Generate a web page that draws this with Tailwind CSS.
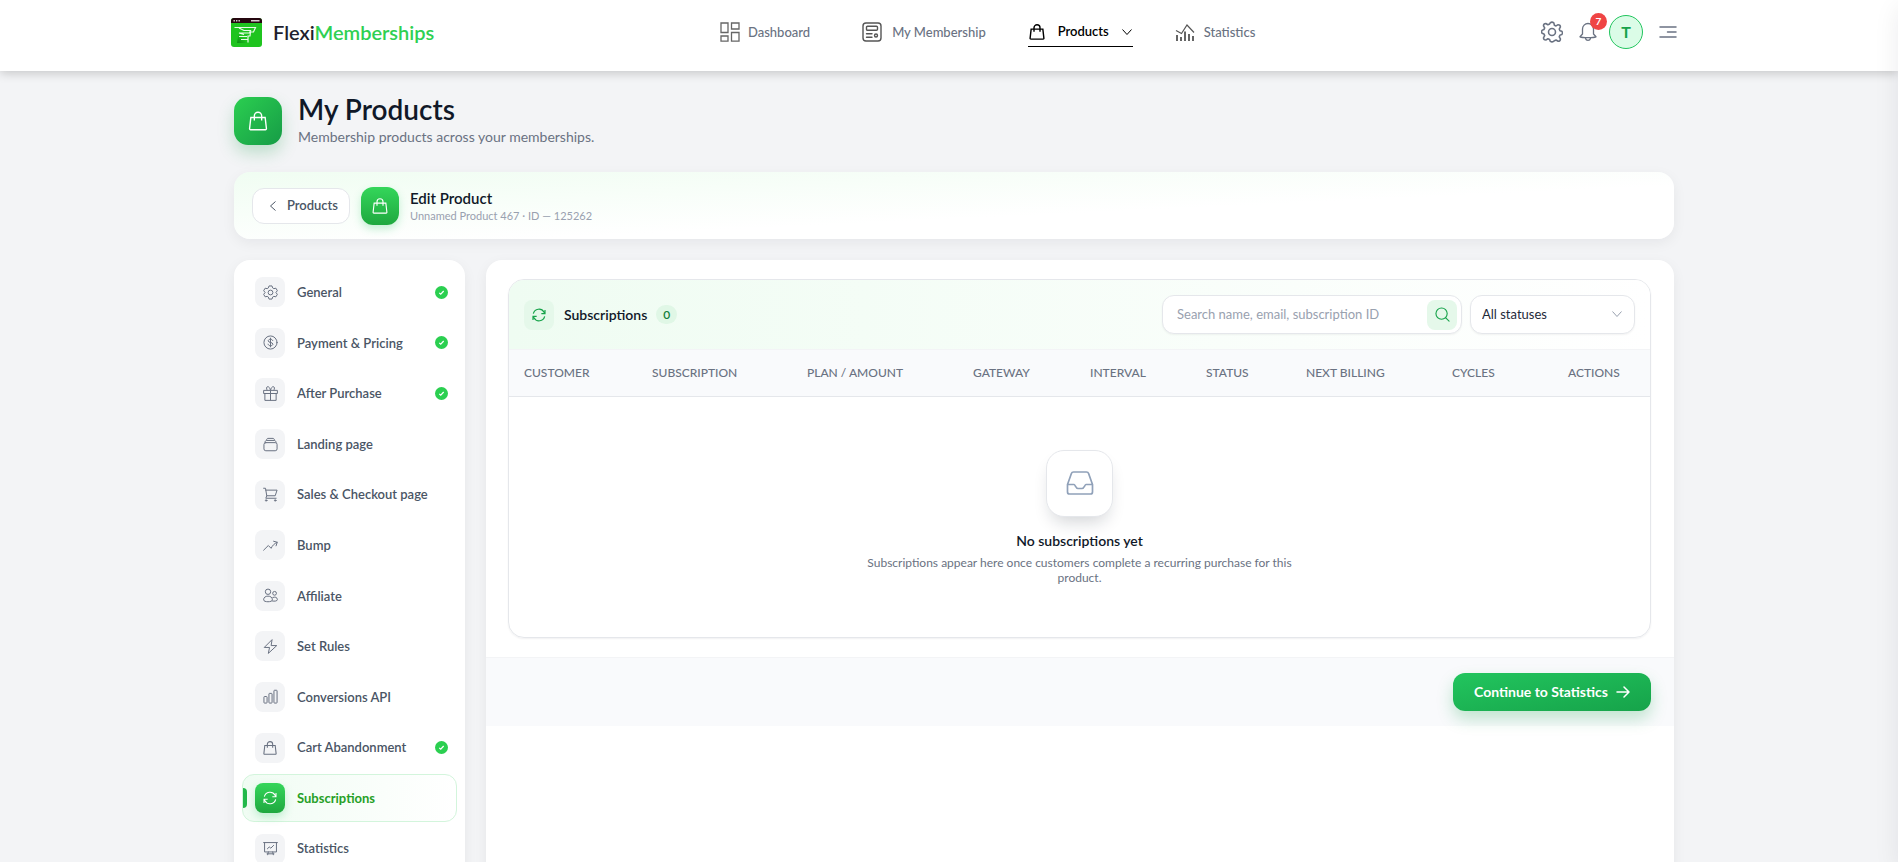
<!DOCTYPE html>
<html lang="en">
<head>
    <meta charset="UTF-8">
    <meta name="viewport" content="width=device-width, initial-scale=1.0">
    <title>FlexiMemberships - My Products</title>
    <script src="https://cdn.jsdelivr.net/npm/@tailwindcss/browser@4"></script>
</head>
<body class="min-h-screen overflow-x-hidden bg-[#f3f4f6] font-['Lato','Liberation_Sans',sans-serif] text-sm text-gray-600">

    <!-- Shared icons -->
    <svg class="hidden" fill="none" stroke-linecap="round" stroke-linejoin="round">
        <symbol id="bag" viewBox="0 0 24 24"><path d="M4.2 8.2h15.6l1.4 12.2a1 1 0 0 1-1 1.1H3.8a1 1 0 0 1-1-1.1zM8 11.5V6.4a4 4 0 0 1 8 0v5.1"/></symbol>
        <symbol id="sync" viewBox="0 0 24 24"><path d="M3.5 10A8.7 8.7 0 0 1 19.6 7.8L21 10M21 4.5V10h-5.5M20.5 14A8.7 8.7 0 0 1 4.4 16.2L3 14M3 19.5V14h5.5"/></symbol>
        <symbol id="check" viewBox="0 0 12 12"><circle cx="6" cy="6" r="6" fill="#2bcf50"/><path d="M3.9 6.300l1.400 1.300 2.700-3" fill="none" stroke="#fff" stroke-width="1.100"/></symbol>
        <symbol id="chevron" viewBox="0 0 12 12"><path d="M1.500 3.500L6 8.500l4.500-5"/></symbol>
    </svg>

    <header class="relative z-10 h-[71px] bg-white pl-[10px] shadow-[0_2px_10px_rgba(0,0,0,0.2)]">
        <div class="mx-auto flex h-16 w-full max-w-[1446px] items-center justify-between">
            <a href="#" class="flex items-center gap-[11px]">
                <svg class="h-[29px] w-[31px]" viewBox="0 0 31 29" fill="none">
                    <defs>
                        <linearGradient id="logo-green" x1="0" y1="1" x2="1" y2="0">
                            <stop offset="0" stop-color="#0b8a12"/>
                            <stop offset=".5" stop-color="#1fc41f"/>
                        </linearGradient>
                    </defs>
                    <rect width="31" height="29" rx="3" fill="#1fc41f"/>
                    <path d="M8 13l9 12H6z" fill="url(#logo-green)"/>
                    <path d="M0 5V3a3 3 0 0 1 3-3h25a3 3 0 0 1 3 3v2z" fill="#25060f"/>
                    <path d="M2.500 2.800h1.400M5 2.800h1.400M7.500 2.800h1.400M20 2.800h8.500" stroke="#d9c9cf" stroke-width="1.600"/>
                    <path d="M3.500 9.500h21l-2 4.500h-3l-.5 4h-2V24.500M8 10l5 2.500h6.500l-1 2.500H8l5 1.500M8 18.500h8M10 21.500h7" stroke="#e9fbe9" stroke-width="1.200"/>
                </svg>
                <span class="text-xl font-semibold text-[#1f1f2e]">Flexi<span class="text-[#2fd052]">Memberships</span></span>
            </a>

            <nav class="flex items-center gap-[42px] text-[13px] font-medium text-gray-500">
                <a href="#" class="flex items-center gap-2">
                    <svg class="size-5" viewBox="0 0 20 20" fill="none" stroke="#666" stroke-width="1.300"><path d="M1 1h7v9.500H1zM11.500 1H19v6h-7.500zM1 14h7v5.200H1zM11.500 10.500H19v8.700h-7.500z"/></svg>
                    Dashboard
                </a>
                <a href="#" class="ml-[10px] flex items-center gap-[10px]">
                    <svg class="size-5" viewBox="0 0 20 20" fill="none" stroke="#555" stroke-width="1.400" stroke-linecap="round"><rect x="1" y="1" width="18" height="18" rx="3"/><rect x="4.500" y="4.300" width="11" height="4" rx="1"/><path d="M4.500 11.800h5.500M4.500 15.200h5.500"/><circle cx="14" cy="13.500" r="1.500"/></svg>
                    My Membership
                </a>
                <a href="#" class="flex h-[30px] w-[105px] items-center justify-between border-b border-black font-semibold text-black">
                    <svg class="size-[18px]" fill="none" stroke="currentColor" stroke-width="1.900"><use href="#bag"/></svg>
                    Products
                    <svg class="size-3" fill="none" stroke="currentColor" stroke-width="1"><use href="#chevron"/></svg>
                </a>
                <a href="#" class="flex items-center gap-[9px]">
                    <svg class="size-5" viewBox="0 0 20 20" fill="none" stroke="#555" stroke-width="1.200"><path d="M1 8.500l5.500 3L12 3l7 7.500"/><path d="M2 13v6M6 15v4M10 9.500V19M14 12v7M18 14v5" stroke-width="1.800"/></svg>
                    Statistics
                </a>
            </nav>

            <div class="flex items-center text-gray-500">
                <button type="button" aria-label="Settings">
                    <svg class="size-[22px]" viewBox="0 0 24 24" fill="none" stroke="currentColor" stroke-width="1.700" stroke-linejoin="round"><circle cx="12" cy="12" r="3.800"/><path d="M10 2q2-1.500 4 0l.6 2.600 1.800.8 2.300-1.400q2.500 0 2.500 2.500l-1.300 2.300.8 1.900 2 .6q1.500 1.700 0 3.400l-2 .7-.8 1.900 1.300 2.300q0 2.500-2.500 2.500l-2.300-1.400-1.800.8L14 22q-2 1.500-4 0l-.6-1.800-1.900-.8-2.300 1.400q-2.500 0-2.500-2.500L4 16l-.8-1.900-1.900-.7q-1.500-1.700 0-3.400l1.900-.6L4 7.500 2.700 5.200q0-2.500 2.500-2.500l2.300 1.400 1.900-.8z"/></svg>
                </button>
                <button type="button" aria-label="Notifications" class="relative ml-[15px]">
                    <svg class="size-5" viewBox="0 0 20 20" fill="none" stroke="currentColor" stroke-width="1.300" stroke-linecap="round" stroke-linejoin="round"><path d="M10 1.500a5.500 5.500 0 0 0-5.500 5.500v5L2 14.800c2.500 1.100 13.500 1.100 16 0L15.500 12V7A5.500 5.500 0 0 0 10 1.500zM7.500 16.500a2.600 2.600 0 0 0 5 0"/></svg>
                    <span class="absolute -top-[9px] left-[12px] flex size-[17px] items-center justify-center rounded-full bg-[#ef4444] text-[10px] font-bold text-white">7</span>
                </button>
                <button type="button" class="ml-[11px] flex size-[34px] items-center justify-center rounded-full border border-[#22c55e] bg-green-100 text-base font-bold text-[#16a34a]">T</button>
                <button type="button" aria-label="Menu" class="ml-4">
                    <svg class="h-[14px] w-[18px]" viewBox="0 0 18 14" stroke="currentColor" stroke-width="1.500" stroke-linecap="round"><path d="M1 2h16M8.500 7H17M1 12h16"/></svg>
                </button>
            </div>
        </div>
    </header>

    <div class="pl-[10px]">
    <main class="mx-auto w-full max-w-[1440px] pt-6">
        <div class="flex items-center gap-4">
            <div class="flex size-12 shrink-0 items-center justify-center rounded-[14px] bg-linear-to-br from-[#2bcf50] to-[#169c46] text-white shadow-[0_8px_16px_rgba(34,160,80,0.25)]">
                <svg class="size-[22px]" fill="none" stroke="currentColor" stroke-width="1.500"><use href="#bag"/></svg>
            </div>
            <div>
                <h1 class="text-[28px] leading-7 font-semibold text-gray-900">My Products</h1>
                <p class="mt-1 text-sm leading-5 text-gray-500">Membership products across your memberships.</p>
            </div>
        </div>

        <section class="mt-[25px] flex h-[67px] items-center rounded-2xl bg-linear-to-br from-[#f0fdf2] to-white to-60% px-[18px] shadow-[0_4px_14px_rgba(15,23,42,0.06)]">
            <a href="#" class="flex h-9 w-[98px] items-center justify-between rounded-xl border border-gray-200 bg-white pr-[11px] pl-[14px] text-[13px] font-semibold text-gray-600">
                <svg class="size-3 rotate-90" fill="none" stroke="currentColor" stroke-width="1"><use href="#chevron"/></svg>
                Products
            </a>
            <div class="ml-[11px] flex size-[38px] items-center justify-center rounded-xl bg-linear-to-b from-[#34d65a] to-[#1fa83f] text-white shadow-[0_4px_8px_rgba(34,197,94,0.25)]">
                <svg class="size-[18px]" fill="none" stroke="currentColor" stroke-width="1.500"><use href="#bag"/></svg>
            </div>
            <div class="ml-[11px]">
                <h2 class="text-[15px] leading-5 font-semibold text-gray-900">Edit Product</h2>
                <p class="text-[11px] leading-4 text-gray-400">Unnamed Product 467 · ID — 125262</p>
            </div>
        </section>

        <div class="mt-[21px] flex items-stretch gap-[21px]">
            <aside class="min-h-[640px] w-[231px] shrink-0 rounded-t-2xl bg-white px-2 pt-2 shadow-[0_4px_14px_rgba(15,23,42,0.06)]">
                <nav class="grid h-[605px] auto-rows-fr gap-[2px] text-[13px] font-semibold text-gray-600">
                    <a href="#" class="flex items-center gap-3 px-[13px]">
                        <span class="flex size-[30px] items-center justify-center rounded-lg bg-gray-100 text-gray-500"><svg class="size-[15px]" viewBox="0 0 24 24" fill="none" stroke="currentColor" stroke-width="1.600" stroke-linejoin="round"><path d="M9.600 1.500h4.800l1 3.200 2 1.100 3.200-.7L23 9.200l-2.200 2.400v.8L23 14.800l-2.400 4.100-3.200-.7-2 1.100-1 3.200H9.600l-1-3.200-2-1.100-3.200.7L1 14.800l2.200-2.400v-.8L1 9.200l2.400-4.100 3.200.7 2-1.100z"/><circle cx="12" cy="12" r="3.800"/></svg></span>
                        <span class="flex-1">General</span>
                        <svg class="-mr-1 size-[13px]"><use href="#check"/></svg>
                    </a>
                    <a href="#" class="flex items-center gap-3 px-[13px]">
                        <span class="flex size-[30px] items-center justify-center rounded-lg bg-gray-100 text-gray-500"><svg class="size-[15px]" viewBox="0 0 24 24" fill="none" stroke="currentColor" stroke-width="1.600" stroke-linecap="round"><circle cx="12" cy="12" r="10.500"/><path d="M12 5v14M15.600 9c-.3-1.500-1.800-2.200-3.600-2.200-2 0-3.600.9-3.600 2.500 0 3.700 7.400 1.700 7.400 5.300 0 1.700-1.700 2.600-3.800 2.600-2 0-3.600-.9-3.800-2.500"/></svg></span>
                        <span class="flex-1">Payment &amp; Pricing</span>
                        <svg class="-mr-1 size-[13px]"><use href="#check"/></svg>
                    </a>
                    <a href="#" class="flex items-center gap-3 px-[13px]">
                        <span class="flex size-[30px] items-center justify-center rounded-lg bg-gray-100 text-gray-500"><svg class="size-[15px]" viewBox="0 0 24 24" fill="none" stroke="currentColor" stroke-width="1.600" stroke-linejoin="round"><path d="M1 7h22v5H1zM3 12h18v11H3zM12 7v16M12 7C11 3 9.500 1 7.500 1S5 5 7 7M12 7c1-4 2.500-6 4.500-6S19 5 17 7"/></svg></span>
                        <span class="flex-1">After Purchase</span>
                        <svg class="-mr-1 size-[13px]"><use href="#check"/></svg>
                    </a>
                    <a href="#" class="flex items-center gap-3 px-[13px]">
                        <span class="flex size-[30px] items-center justify-center rounded-lg bg-gray-100 text-gray-500"><svg class="size-[15px]" viewBox="0 0 24 24" fill="none" stroke="currentColor" stroke-width="1.600" stroke-linecap="round"><rect x="1.500" y="9" width="21" height="13" rx="3"/><path d="M3 8.500C3.500 6 5 5.500 6 5.500h12c1 0 2.500.5 3 3M5.500 5C6 2.800 7 2.200 8 2.200h8c1 0 2 .6 2.500 2.800"/></svg></span>
                        <span class="flex-1">Landing page</span>
                    </a>
                    <a href="#" class="flex items-center gap-3 px-[13px]">
                        <span class="flex size-[30px] items-center justify-center rounded-lg bg-gray-100 text-gray-500"><svg class="size-[15px]" viewBox="0 0 24 24" fill="none" stroke="currentColor" stroke-width="1.600" stroke-linecap="round" stroke-linejoin="round"><path d="M1 2h3l2 12h13.500L22.500 5H4.500M6 14l-1.500 4H21"/><circle cx="5" cy="21.500" r="1.200"/><circle cx="19.500" cy="21.500" r="1.200"/></svg></span>
                        <span class="flex-1 whitespace-nowrap">Sales &amp; Checkout page</span>
                    </a>
                    <a href="#" class="flex items-center gap-3 px-[13px]">
                        <span class="flex size-[30px] items-center justify-center rounded-lg bg-gray-100 text-gray-500"><svg class="size-[15px]" viewBox="0 0 24 24" fill="none" stroke="currentColor" stroke-width="1.600" stroke-linecap="round" stroke-linejoin="round"><path d="M1 19.500l7.500-7.500 4.500 4.500c2-4.500 5-7.500 9.500-9.500M17 5.200l5.800 1.600-1.900 5.700"/></svg></span>
                        <span class="flex-1">Bump</span>
                    </a>
                    <a href="#" class="flex items-center gap-3 px-[13px]">
                        <span class="flex size-[30px] items-center justify-center rounded-lg bg-gray-100 text-gray-500"><svg class="size-[15px]" viewBox="0 0 24 24" fill="none" stroke="currentColor" stroke-width="1.600" stroke-linejoin="round"><circle cx="8" cy="6" r="4.300"/><circle cx="18.500" cy="8.500" r="3"/><path d="M1 19c0-4 3-6 7-6s7 2 7 6c0 4-14 4-14 0zM15 15.500c4-2 8-.5 8 3 0 2.500-4.500 3-8.500 2.200"/></svg></span>
                        <span class="flex-1">Affiliate</span>
                    </a>
                    <a href="#" class="flex items-center gap-3 px-[13px]">
                        <span class="flex size-[30px] items-center justify-center rounded-lg bg-gray-100 text-gray-500"><svg class="size-[15px]" viewBox="0 0 24 24" fill="none" stroke="currentColor" stroke-width="1.600" stroke-linejoin="round"><path d="M14.500 1L2 13.500h8.500L8.500 23 22 10.500h-9z"/></svg></span>
                        <span class="flex-1">Set Rules</span>
                    </a>
                    <a href="#" class="flex items-center gap-3 px-[13px]">
                        <span class="flex size-[30px] items-center justify-center rounded-lg bg-gray-100 text-gray-500"><svg class="size-[15px]" viewBox="0 0 24 24" fill="none" stroke="currentColor" stroke-width="1.600"><rect x="1.500" y="12" width="5" height="10.500" rx="1"/><rect x="9.500" y="7" width="5" height="15.500" rx="1"/><rect x="17.500" y="2" width="5" height="20.500" rx="1"/></svg></span>
                        <span class="flex-1">Conversions API</span>
                    </a>
                    <a href="#" class="flex items-center gap-3 px-[13px]">
                        <span class="flex size-[30px] items-center justify-center rounded-lg bg-gray-100 text-gray-500"><svg class="size-4" fill="none" stroke="currentColor" stroke-width="1.600"><use href="#bag"/></svg></span>
                        <span class="flex-1">Cart Abandonment</span>
                        <svg class="-mr-1 size-[13px]"><use href="#check"/></svg>
                    </a>
                    <a href="#" class="relative flex items-center gap-3 rounded-xl border border-[#d3f5dc] bg-linear-to-r from-[#f0fcf3] to-white px-3 font-bold text-[#26a026]">
                        <span class="absolute left-0 h-5 w-1 rounded-r bg-[#22b84a]"></span>
                        <span class="flex size-[30px] items-center justify-center rounded-lg bg-linear-to-b from-[#34d65a] to-[#1fa83f] text-white shadow-[0_4px_8px_rgba(34,197,94,0.25)]"><svg class="size-4" fill="none" stroke="currentColor" stroke-width="1.600"><use href="#sync"/></svg></span>
                        <span class="flex-1">Subscriptions</span>
                    </a>
                    <a href="#" class="flex items-center gap-3 px-[13px]">
                        <span class="flex size-[30px] items-center justify-center rounded-lg bg-gray-100 text-gray-500"><svg class="size-[15px]" viewBox="0 0 24 24" fill="none" stroke="currentColor" stroke-width="1.600" stroke-linecap="round" stroke-linejoin="round"><path d="M1 2.500h22M2.500 2.500v15h19v-15M7.500 22l1-4.500M16.500 22l-1-4.500M6.500 20.500h11M7 12.500l3-3 2.500 2L17 7"/></svg></span>
                        <span class="flex-1">Statistics</span>
                    </a>
                </nav>
            </aside>

            <section class="min-w-0 flex-1 rounded-t-2xl bg-white pt-[19px] shadow-[0_4px_14px_rgba(15,23,42,0.06)]">
                <div class="mr-[23px] ml-[22px] overflow-hidden rounded-2xl border border-gray-200 shadow-[0_1px_2px_rgba(15,23,42,0.06)]">
                    <div class="flex h-[70px] items-center border-b border-gray-100 bg-linear-to-r from-[#effcf2] to-white px-[15px]">
                        <span class="flex size-[30px] items-center justify-center rounded-lg bg-[#e5f8ea] text-[#16a34a]"><svg class="size-4" fill="none" stroke="currentColor" stroke-width="1.800"><use href="#sync"/></svg></span>
                        <h3 class="ml-[10px] text-sm font-semibold text-gray-900">Subscriptions</h3>
                        <span class="ml-[9px] rounded-full bg-[#e0f7e6] px-[7px] text-xs leading-[19px] font-semibold text-[#15803d]">0</span>
                        <div class="ml-auto flex h-[39px] w-[300px] items-center rounded-xl border border-gray-200 bg-white pr-1 pl-[14px] shadow-xs">
                            <input type="search" aria-label="Search subscriptions" placeholder="Search name, email, subscription ID" class="min-w-0 flex-1 text-[13px] outline-none placeholder:text-gray-400">
                            <button type="button" aria-label="Search" class="flex size-[30px] items-center justify-center rounded-lg bg-[#e5f8ea] text-[#16a34a]"><svg class="size-[15px]" viewBox="0 0 16 16" fill="none" stroke="currentColor" stroke-width="1.200" stroke-linecap="round"><circle cx="7" cy="7" r="6"/><path d="M11.500 11.500L15 15"/></svg></button>
                        </div>
                        <div class="relative ml-2">
                            <select aria-label="Status" class="h-[39px] w-[165px] appearance-none rounded-xl border border-gray-200 bg-white px-[11px] text-[13px] text-gray-800 shadow-xs">
                                <option>All statuses</option>
                            </select>
                            <svg class="pointer-events-none absolute top-[13px] right-3 size-3 text-gray-400" fill="none" stroke="currentColor" stroke-width="1"><use href="#chevron"/></svg>
                        </div>
                    </div>

                    <table class="w-full table-fixed text-left">
                        <thead>
                            <tr class="h-[46px] border-b border-gray-200 bg-[#f9fafc] text-xs text-gray-500">
                                <th class="w-[128px] pl-[15px] font-medium">CUSTOMER</th>
                                <th class="w-[155px] pl-[15px] font-medium">SUBSCRIPTION</th>
                                <th class="w-[166px] pl-[15px] font-medium">PLAN / AMOUNT</th>
                                <th class="w-[117px] pl-[15px] font-medium">GATEWAY</th>
                                <th class="w-[116px] pl-[15px] font-medium">INTERVAL</th>
                                <th class="w-[100px] pl-[15px] font-medium">STATUS</th>
                                <th class="w-[146px] pl-[15px] font-medium">NEXT BILLING</th>
                                <th class="w-[116px] pl-[15px] font-medium">CYCLES</th>
                                <th class="pl-[15px] font-medium">ACTIONS</th>
                            </tr>
                        </thead>
                        <tbody>
                            <tr>
                                <td colspan="9" class="pt-[53px] pb-[52px] text-center">
                                    <div class="mx-auto flex size-[67px] items-center justify-center rounded-[18px] border border-gray-200 bg-white text-slate-400 shadow-[0_10px_18px_-6px_rgba(15,23,42,0.2)]">
                                        <svg class="size-7" viewBox="0 0 28 28" fill="none" stroke="currentColor" stroke-width="1.700" stroke-linejoin="round"><path d="M7.500 3h13c1 0 1.800.6 2.100 1.500L26.500 15.500V23a2 2 0 0 1-2 2h-21a2 2 0 0 1-2-2v-7.500L5.400 4.500C5.700 3.600 6.500 3 7.500 3zM1.500 15.500H8c1.200 0 1.800 4 4 4h4c2.200 0 2.800-4 4-4h6.500"/></svg>
                                    </div>
                                    <p class="mt-[14px] text-sm leading-5 font-semibold text-gray-900">No subscriptions yet</p>
                                    <p class="mx-auto mt-1 max-w-[440px] text-xs leading-[15px] text-gray-500">Subscriptions appear here once customers complete a recurring purchase for this product.</p>
                                </td>
                            </tr>
                        </tbody>
                    </table>
                </div>

                <div class="mt-[19px] flex justify-end border-t border-gray-100 bg-[#f9fafc] px-[23px] py-[15px]">
                    <button type="button" class="flex h-[38px] w-[198px] items-center justify-center gap-2 rounded-xl bg-linear-to-br from-[#22c55e] to-[#16a34a] text-sm font-bold text-white shadow-[0_8px_16px_rgba(22,163,74,0.25)]">
                        Continue to Statistics
                        <svg class="size-[14px]" viewBox="0 0 14 14" fill="none" stroke="currentColor" stroke-width="1.500" stroke-linecap="round" stroke-linejoin="round"><path d="M1 7h12M8 2l5 5-5 5"/></svg>
                    </button>
                </div>
            </section>
        </div>
    </main>
    </div>

    <!-- Closed side drawer, only its shadow reaches the page -->
    <aside class="fixed inset-y-0 left-full z-20 w-80 bg-white shadow-[0_8px_24px_rgba(15,23,42,0.08)]"></aside>
</body>
</html>
